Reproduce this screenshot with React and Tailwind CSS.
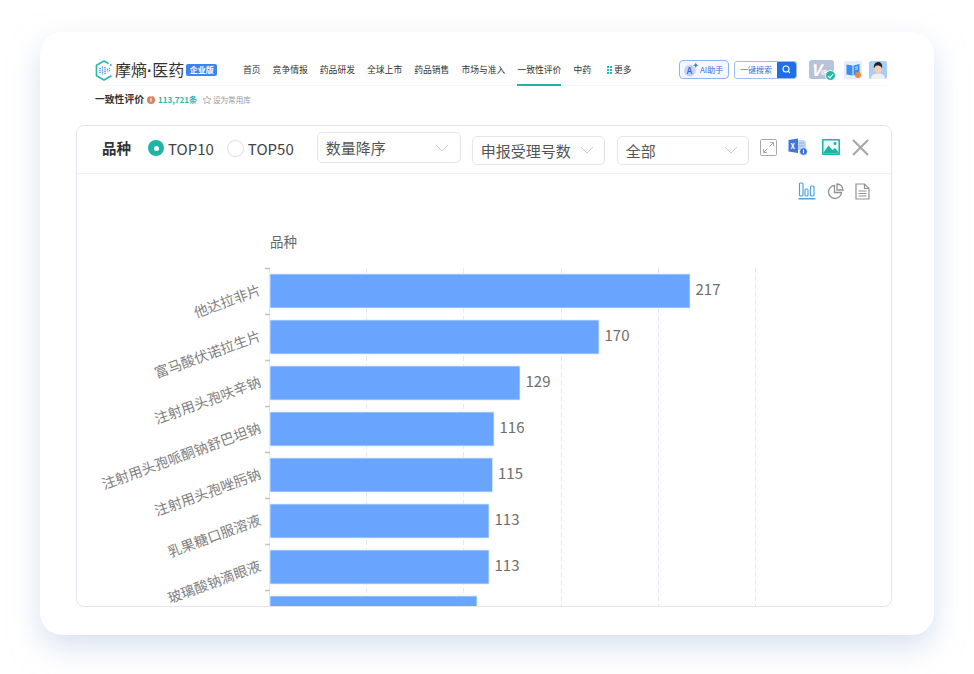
import React from "react";

const font = "font-['Noto_Sans_CJK_SC','Noto_Sans',sans-serif]";

function Chevron() {
  return (
    <svg width="14" height="8" viewBox="0 0 14 8" fill="none" stroke="#c9ccd3" strokeWidth="1">
      <path d="M1 1l6 6 6-6" />
    </svg>
  );
}

function Logo() {
  return (
    <svg width="18" height="21" viewBox="0 0 18 21" fill="none">
      <path d="M13.500 3.600L9 1 1.500 5.300v10.400L9 20l7.500-4.300" stroke="#2bb8b0" strokeWidth="1.700" strokeLinejoin="round" />
      <path d="M16.500 5.500L15 4.600" stroke="#2bb8b0" strokeWidth="1.700" />
      <path d="M5 8v5M7.500 6.500v8M10 7v7M12.500 8.500v4" stroke="#3d8cf0" strokeWidth="1.400" strokeDasharray="1.200 0.700" />
      <path d="M14.600 8v4" stroke="#2bb8b0" strokeWidth="1.200" strokeDasharray="1.200 0.700" />
    </svg>
  );
}

function Radio({ on, label }) {
  return (
    <div className="flex items-center gap-[4px]">
      {on ? (
        <span className="w-4 h-4 rounded-full bg-[#1fb5a6] flex items-center justify-center">
          <span className="w-[5px] h-[5px] rounded-full bg-white" />
        </span>
      ) : (
        <span className="w-[17px] h-[17px] rounded-full border border-[#dcdfe6] bg-white" />
      )}
      <span className="text-[15px] leading-none text-[#444]">{label}</span>
    </div>
  );
}

function Select({ label, className, gap }) {
  return (
    <div className={`flex items-center justify-between border border-[#e3e5ee] rounded-[5px] bg-white pl-[8px] ${gap} ${className}`}>
      <span className="text-[15px] leading-none text-[#555]">{label}</span>
      <Chevron />
    </div>
  );
}

const NAV = ["首页", "竞争情报", "药品研发", "全球上市", "药品销售", "市场与准入", "一致性评价", "中药"];

function Header() {
  return (
    <div className="ml-[55px] mr-[47px]">
      <div className="flex items-start h-[34px] border-b border-[#f6f7f9]">
        <div className="flex items-center h-[36px] w-[148px] shrink-0">
          <Logo />
          <span className="ml-[2px] text-[16px] leading-none text-[#333] whitespace-nowrap">
            摩熵<span className="font-['Liberation_Sans'] font-bold">·</span>医药
          </span>
          <span className="ml-[2px] w-[31px] h-[12px] rounded-[2px] bg-[#3d84f0] text-white text-[8px] font-bold leading-[12px] text-center whitespace-nowrap">企业版</span>
        </div>
        <div className="flex gap-3 h-[34px] text-[8.800px] text-[#333] whitespace-nowrap">
          {NAV.map((n) => (
            <span key={n} className={`h-[34px] pt-[8px] leading-[20px] ${n === "一致性评价" ? "border-b-2 border-[#1fb5a6]" : ""}`}>{n}</span>
          ))}
          <span className="h-[34px] pt-[8px] leading-[20px] flex items-start ml-[4px]">
            <span className="grid grid-cols-2 gap-[1.500px] w-[5px] mt-[6px] mr-[2px]">
              {[0, 1, 2, 3, 4, 5].map((i) => <span key={i} className="w-[1.600px] h-[1.600px] bg-[#2bb8b0]" />)}
            </span>
            更多
          </span>
        </div>
        <div className="ml-auto flex items-center h-[35px]">
          <div className="w-[50px] h-[19px] rounded-[4px] border border-[#8ab4f8] bg-[#f4f7ff] flex items-center pl-[3px] text-[8px] text-[#3a6fd8] whitespace-nowrap">
            <svg width="16" height="15" viewBox="0 0 15 14" className="mr-[1px]">
              <circle cx="6.500" cy="8" r="5.500" fill="#c3d4fa" />
              <text x="3.500" y="11" fontSize="8" fontWeight="700" fill="#3a6fd8">A</text>
              <path d="M12 0.500l.7 1.800 1.800.7-1.800.7-.7 1.800-.7-1.800-1.800-.7 1.800-.7z" fill="#3a6fd8" />
            </svg>
            AI助手
          </div>
          <div className="ml-[5px] w-[63px] h-[18px] rounded-[3px] border border-[#9dbdf2] flex overflow-hidden">
            <span className="flex-1 text-[8px] leading-[16px] text-[#3a6fd8] text-center whitespace-nowrap">一键搜索</span>
            <span className="w-[19px] bg-[#1f6fe5] flex items-center justify-center">
              <svg width="9" height="9" viewBox="0 0 9 9" fill="none" stroke="#fff" strokeWidth="1.100"><circle cx="4" cy="4" r="3" /><path d="M6.200 6.200L8 8" /></svg>
            </span>
          </div>
          <div className="relative ml-[12px] w-[25px] h-[19px] rounded-[3px] bg-[#b6c3d8]">
            <span className="absolute left-[2px] top-[1px] text-[16px] leading-none font-bold italic text-white">V</span>
            <span className="absolute left-[12px] top-[10px] text-[6px] leading-none font-bold text-white">IP</span>
            <span className="absolute -right-[2px] -bottom-[2px] w-[11px] h-[11px] rounded-full bg-[#20b8a6] border border-white flex items-center justify-center">
              <svg width="7" height="6" viewBox="0 0 7 6" fill="none" stroke="#fff" strokeWidth="1.100"><path d="M1 3l2 2 3-4" /></svg>
            </span>
          </div>
          <div className="relative ml-[10px] w-[18px] h-[18px] rounded-[2px] bg-[#e6eef9] flex items-center justify-center">
            <svg width="14" height="13" viewBox="0 0 14 13">
              <path d="M0.500 1.500l6 1v10l-6-1z" fill="#3d8cf0" />
              <path d="M13.500 1l-6 1.500v10l6-1.500z" fill="#3d8cf0" />
              <path d="M9 4.500l3-.7M9 6.500l3-.7" stroke="#fff" strokeWidth="0.700" />
            </svg>
            <span className="absolute right-[1px] bottom-[1px] w-[6px] h-[6px] rounded-full bg-[#ee8a3c]" />
          </div>
          <div className="ml-[7px] w-[18px] h-[18px] rounded-[2px] bg-[#a9cdf5] overflow-hidden">
            <svg width="18" height="18" viewBox="0 0 18 18">
              <path d="M2 18c0-4 3-5.500 7-5.500s7 1.500 7 5.500z" fill="#eef0f2" />
              <ellipse cx="9" cy="8" rx="3.800" ry="4.800" fill="#f4cdb2" />
              <path d="M5 7.500c-.8-4.500 2-6.500 4.500-6.500S13.800 3.500 13 7.500c-.8-2.200-2-3-4-3S5.800 5 5 7.500z" fill="#1f2228" />
            </svg>
          </div>
        </div>
      </div>
      <div className="flex items-center h-[28px] whitespace-nowrap">
        <span className="text-[9.800px] font-bold text-[#333] leading-none">一致性评价</span>
        <span className="ml-[3px] w-2 h-2 rounded-full bg-[#d9855a] text-white text-[6px] font-bold leading-[8px] text-center">i</span>
        <span className="ml-[3px] text-[8px] font-bold text-[#27bba9] leading-none">113,721条</span>
        <svg className="ml-[5px]" width="10" height="10" viewBox="0 0 10 10" fill="none" stroke="#a8a8a8" strokeWidth="0.800"><path d="M5 1l1.200 2.600 2.800.3-2.100 1.900.6 2.800L5 7.200 2.500 8.600l.6-2.800L1 3.900l2.800-.3z" /></svg>
        <span className="ml-[1px] text-[7.600px] text-[#999] leading-none">设为常用库</span>
      </div>
    </div>
  );
}

function Toolbar() {
  return (
    <div className="flex items-center h-[48px] border-b border-[#eef0f4] pl-[25px] pb-[3px]">
      <span className="text-[14.500px] font-bold leading-none text-[#333] mr-[17px]">品种</span>
      <Radio on label="TOP10" />
      <span className="w-[13px]" />
      <Radio label="TOP50" />
      <Select label="数量降序" className="ml-[23px] w-[144px] h-[31px] -mt-[1px]" gap="pr-[11px]" />
      <Select label="申报受理号数" className="ml-[11px] w-[133px] h-[29px] mt-[4px]" gap="pr-[10px]" />
      <Select label="全部" className="ml-[12px] w-[132px] h-[29px] mt-[4px]" gap="pr-[10px]" />
      <svg className="ml-[11px] -mt-[2px]" width="17" height="17" viewBox="0 0 17 17" fill="none" stroke="#a9a9a9" strokeWidth="1">
        <rect x="0.500" y="0.500" width="16" height="16" rx="1" />
        <path d="M9.500 7.500L13.500 3.500M10 3.500h3.500V7M7.500 9.500L3.500 13.500M3.500 10v3.500H7" />
      </svg>
      <svg className="ml-[11px] -mt-[2px]" width="20" height="18" viewBox="0 0 20 18">
        <path d="M7 2h9l2 2v8H7z" fill="#c4d6f5" />
        <path d="M11 5h5M11 8h5M11 11h5" stroke="#8fb0ea" strokeWidth="1" />
        <path d="M0.500 2L10 0.500V15L0.500 13.500z" fill="#3d78dd" />
        <text x="2.600" y="10.500" fontSize="7" fontWeight="700" fill="#fff">X</text>
        <circle cx="15.500" cy="13.500" r="3.800" fill="#2f6fd0" stroke="#fff" strokeWidth="0.600" />
        <path d="M15.500 11.500v4" stroke="#fff" strokeWidth="1.200" />
      </svg>
      <svg className="ml-[14px] -mt-[2px]" width="18" height="16" viewBox="0 0 18 16">
        <rect x="0" y="0" width="18" height="16" rx="1" fill="#1fb5a6" />
        <rect x="1.500" y="1.500" width="15" height="13" fill="#e8f8f6" />
        <circle cx="13" cy="4.500" r="1.500" fill="#1fb5a6" />
        <path d="M1.500 13.500L6.500 6.500 10.500 11 13 9 16.500 13v1.500h-15z" fill="#1fb5a6" />
      </svg>
      <svg className="ml-[12px] -mt-[2px]" width="17" height="17" viewBox="0 0 17 17" fill="none" stroke="#a5a5a5" strokeWidth="2">
        <path d="M1 1l15 15M16 1L1 16" />
      </svg>
    </div>
  );
}

const BARS = [
  { name: "他达拉非片", v: 217, w: 420 },
  { name: "富马酸伏诺拉生片", v: 170, w: 329 },
  { name: "注射用头孢呋辛钠", v: 129, w: 250 },
  { name: "注射用头孢哌酮钠舒巴坦钠", v: 116, w: 224 },
  { name: "注射用头孢唑肟钠", v: 115, w: 222.500 },
  { name: "乳果糖口服溶液", v: 113, w: 219 },
  { name: "玻璃酸钠滴眼液", v: 113, w: 219 },
  { name: "", v: null, w: 207 },
];

// SVG is positioned so x = page x - 77, y = page y - 206
function Chart() {
  const ox = 270 - 77;
  const oy = 274 - 206;
  return (
    <svg width="814" height="400" viewBox="0 0 814 400" className={font} style={{ display: "block" }}>
      <text x={ox} y={41} fontSize="13.500" fill="#666">品种</text>
      {[366, 463, 561, 658, 755].map((x) => (
        <line key={x} x1={x - 77 + 0.5} x2={x - 77 + 0.5} y1={62} y2={400} stroke="#e4e9f3" strokeWidth="1" strokeDasharray="5 3" />
      ))}
      <line x1={ox - 0.5} x2={ox - 0.5} y1={62} y2={400} stroke="#e6e8ed" strokeWidth="1" />
      {BARS.map((b, i) => {
        const y = oy + i * 46;
        return (
          <g key={i}>
            <line x1={ox - 5} x2={ox} y1={y - 5.500} y2={y - 5.500} stroke="#bfc2c8" strokeWidth="1.500" />
            <rect x={ox} y={y} width={b.w} height={34} fill="#69a5ff" stroke="#dbe9ff" strokeWidth="0.800" />
            {b.v && <text x={ox + b.w + 5.500} y={y + 21} fontSize="15" fill="#6e6e6e">{b.v}</text>}
            {b.name && (
              <text x={0} y={0} fontSize="14" fill="#808080" textAnchor="end" transform={`translate(${ox - 8} ${y + 16 + 4}) rotate(-20)`}>{b.name}</text>
            )}
          </g>
        );
      })}
    </svg>
  );
}

function Panel() {
  return (
    <div className="ml-[36px] mr-[42px] mt-[11px] h-[482px] border border-[#e4e6ec] rounded-[8px] overflow-hidden bg-white">
      <Toolbar />
      <div className="relative h-[433px] overflow-hidden">
        <div className="flex justify-end items-center h-[32px] pt-[2px] pr-[21px] gap-[11px]">
          <svg width="18" height="18" viewBox="0 0 18 18" fill="none" stroke="#4ea3d8" strokeWidth="1.200">
            <rect x="1.500" y="1" width="3.500" height="13" rx="1" />
            <rect x="7" y="7" width="3" height="7" rx="1" />
            <rect x="12.500" y="4" width="3.500" height="10" rx="1" />
            <path d="M0.500 16.800h17" strokeWidth="1.400" />
          </svg>
          <svg width="17" height="17" viewBox="0 0 17 17" fill="none" stroke="#929292" strokeWidth="1.300">
            <path d="M7.500 2.500a6.500 6.500 0 1 0 7 7h-7z" />
            <path d="M10 1a6 6 0 0 1 6 6h-6z" />
          </svg>
          <svg width="15" height="17" viewBox="0 0 15 17" fill="none" stroke="#929292" strokeWidth="1.200">
            <path d="M1 1h8.500L14 5.500V16H1z" />
            <path d="M9.500 1v4.500H14M3.500 8h8M3.500 10.500h8M3.500 13h8" />
          </svg>
        </div>
        <Chart />
      </div>
    </div>
  );
}

export default function App() {
  return (
    <div className={`w-[974px] h-[674px] overflow-hidden bg-white ${font}`}>
      <div className="ml-[40px] mt-[32px] w-[894px] h-[603px] rounded-[22px] bg-white shadow-[0_12px_30px_rgba(190,205,232,0.6)] pt-[20px]">
        <Header />
        <Panel />
      </div>
    </div>
  );
}
